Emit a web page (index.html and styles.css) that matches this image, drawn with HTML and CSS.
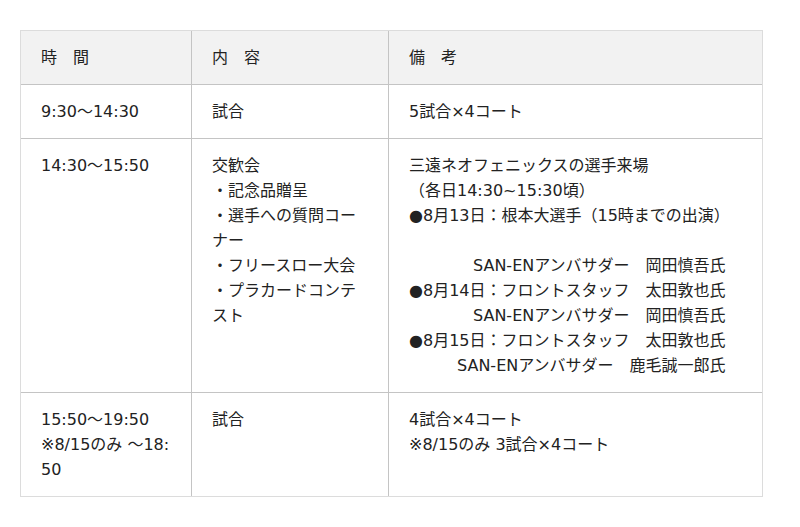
FILE: index.html
```html
<!DOCTYPE html>
<html lang="ja">
<head>
<meta charset="utf-8">
<title>スケジュール</title>
<link rel="stylesheet" href="styles.css">
</head>
<body>
<div class="wrap">
<table class="schedule">
<colgroup>
<col class="c1"><col class="c2"><col class="c3">
</colgroup>
<thead>
<tr><th>時　間</th><th>内　容</th><th>備　考</th></tr>
</thead>
<tbody>
<tr>
<td>9:30〜14:30</td>
<td>試合</td>
<td>5試合×4コート</td>
</tr>
<tr>
<td>14:30〜15:50</td>
<td>交歓会<br>・記念品贈呈<br>・選手への質問コー<br>ナー<br>・フリースロー大会<br>・プラカードコンテ<br>スト</td>
<td>三遠ネオフェニックスの選手来場<br>（各日14:30~15:30頃）<br>●8月13日：根本大選手（15時までの出演）<br><br>　　　　SAN-ENアンバサダー　岡田慎吾氏<br>●8月14日：フロントスタッフ　太田敦也氏<br>　　　　SAN-ENアンバサダー　岡田慎吾氏<br>●8月15日：フロントスタッフ　太田敦也氏<br>　　　SAN-ENアンバサダー　鹿毛誠一郎氏</td>
</tr>
<tr>
<td>15:50〜19:50<br>※8/15のみ 〜18:<br>50</td>
<td>試合</td>
<td>4試合×4コート<br>※8/15のみ 3試合×4コート</td>
</tr>
</tbody>
</table>
</div>
</body>
</html>
```
FILE: styles.css
```css
html, body {
  margin: 0;
  padding: 0;
  background: #fff;
}
body {
  font-family: "DejaVu Sans", "Noto Sans CJK JP", sans-serif;
  font-size: 16px;
  line-height: 25px;
  color: #222;
}
.wrap {
  padding: 30px 20px;
}
.schedule {
  width: 743px;
  table-layout: fixed;
  border-collapse: separate;
  border-spacing: 0;
  border: 1px solid #dcdcdc;
  box-sizing: border-box;
}
.schedule col.c1 { width: 170px; }
.schedule col.c2 { width: 197px; }
.schedule col.c3 { width: 374px; }
.schedule th,
.schedule td {
  box-sizing: border-box;
  padding: 14px 20px 14px 20px;
  text-align: left;
  vertical-align: top;
  font-weight: normal;
  white-space: nowrap;
}
.schedule th {
  background: #f2f2f2;
}
.schedule th + th,
.schedule td + td {
  border-left: 1px solid #c4c4c4;
}
.schedule tbody td {
  border-top: 1px solid #c4c4c4;
}
```
